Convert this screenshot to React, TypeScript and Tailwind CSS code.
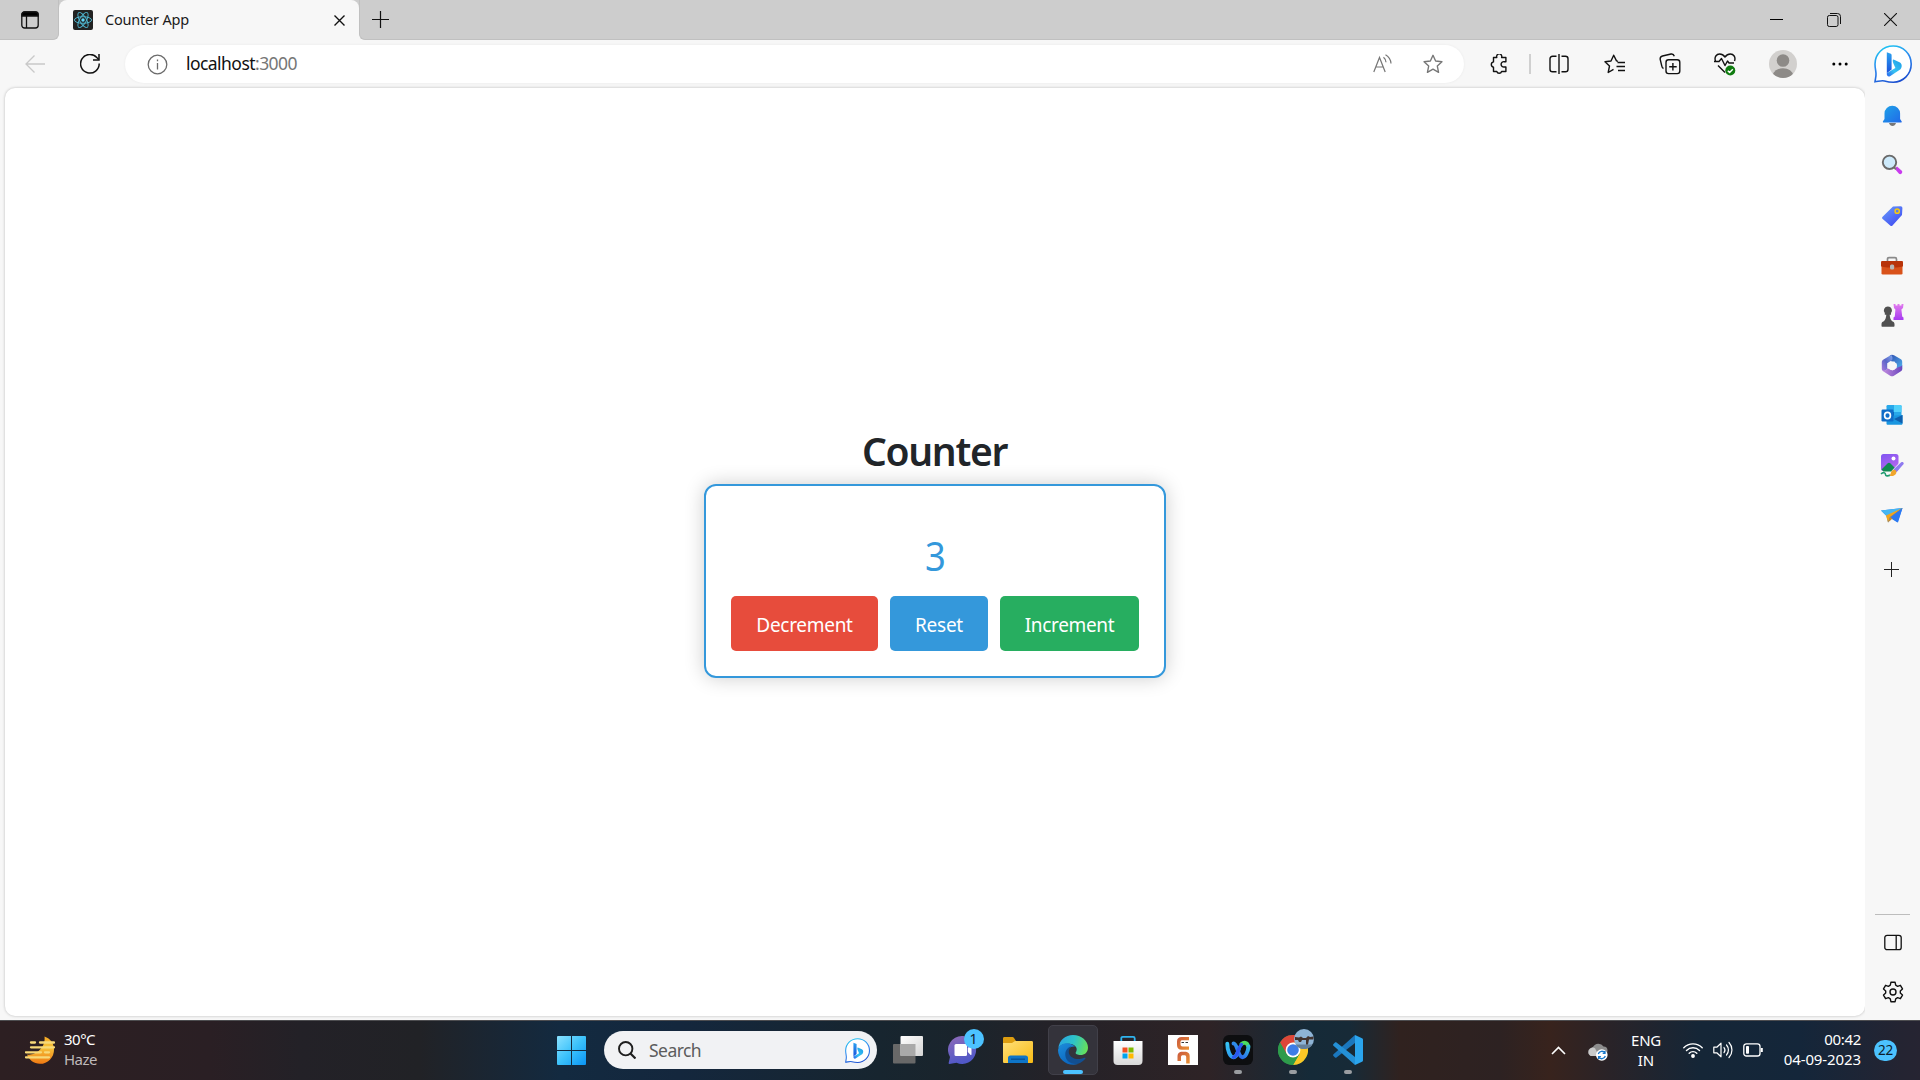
import React from "react";

type IconProps = { className?: string };

function BingBubble({ className, id }: IconProps & { id: string }) {
  return (
    <svg className={className} viewBox="0 0 38 38" fill="none">
      <defs>
        <linearGradient id={id + "a"} x1="0.2" y1="0" x2="0.6" y2="1">
          <stop offset="0" stopColor="#1fc8f2" />
          <stop offset="0.5" stopColor="#2b86ee" />
          <stop offset="1" stopColor="#1b4fd0" />
        </linearGradient>
        <linearGradient id={id + "b"} x1="0" y1="0" x2="0" y2="1">
          <stop offset="0" stopColor="#2aa2f0" />
          <stop offset="1" stopColor="#1a50dc" />
        </linearGradient>
        <linearGradient id={id + "c"} x1="1" y1="0" x2="0" y2="1">
          <stop offset="0" stopColor="#1c9ce8" />
          <stop offset="0.6" stopColor="#37c3f2" />
          <stop offset="1" stopColor="#2a62ee" />
        </linearGradient>
      </defs>
      <path
        d="M19.2 1C9 1 1 9 1 19c0 3.600.8 6.600 1 9.500.2 3-.7 5.500-1 8.300 3.500-.4 6.500-1.500 9.500-.8 3 .8 5.500 1.200 8.700 1.200C29.300 37.200 37.200 29 37.200 19S29.300 1 19.200 1z"
        fill="#fff"
        stroke={`url(#${id}a)`}
        strokeWidth="1.600"
      />
      <path d="M12.800 7.300l4 1.500c.5.2.8.600.8 1.200v14.500l-4.800 3.800z" fill={`url(#${id}b)`} />
      <path d="M19.500 14.500l6 2.700c2.500 1.200 3 4.600 1 7L16 31.300c-2 1-3.500-.8-3.200-3l4.800-3 3.800-2.300-2-4.500c-.8-2-1-4 .1-4z" fill={`url(#${id}c)`} />
    </svg>
  );
}

function TabActions() {
  return (
    <svg className="ml-0.5 h-[18px] w-[18px]" viewBox="0 0 18 18" fill="none" stroke="#111" strokeWidth="1.300">
      <rect x="0.8" y="0.8" width="16.400" height="16.200" rx="2.800" />
      <path d="M1 3.500C1 2 2 1 3.500 1h11C16 1 17 2 17 3.500V5H1z" fill="#000" />
      <path d="M5.500 5v12" />
    </svg>
  );
}

function ReactLogo() {
  return (
    <svg className="h-5 w-5" viewBox="0 0 20 20" fill="none">
      <rect width="20" height="20" rx="2" fill="#222" />
      <g stroke="#4fb5cf" strokeWidth="0.95">
        <ellipse cx="10" cy="10" rx="8.600" ry="3.300" />
        <ellipse cx="10" cy="10" rx="8.600" ry="3.300" transform="rotate(60 10 10)" />
        <ellipse cx="10" cy="10" rx="8.600" ry="3.300" transform="rotate(120 10 10)" />
      </g>
      <circle cx="10" cy="10" r="1.700" fill="#61dafb" />
    </svg>
  );
}

function TitleBar() {
  return (
    <header className="flex h-10 shrink-0 items-stretch bg-[#f7f7f7]">
      <div className="flex w-[59px] items-center justify-center rounded-br-[6px] border-r border-b border-[#c0c0c0] bg-[#cdcdcd]">
        <TabActions />
      </div>
      <div className="flex w-[300px] items-center bg-[linear-gradient(#cdcdcd_12px,#f7f7f7_12px)]">
        <div className="flex h-full w-full items-center rounded-t-[8px] bg-[#f7f7f7] pl-[14px]">
          <ReactLogo />
          <span className="mb-[2px] ml-3 w-[220px] text-[14.500px] leading-5 tracking-[-0.200px] text-[#1b1b1b]">Counter App</span>
          <svg className="mt-px ml-[9px] h-[11px] w-[11px] shrink-0" viewBox="0 0 11 11" stroke="#111" strokeWidth="1.400">
            <path d="M.5.5l10 10M10.500.5l-10 10" />
          </svg>
        </div>
      </div>
      <div className="flex grow items-center rounded-bl-[6px] border-b border-l border-[#c0c0c0] bg-[#cdcdcd]">
        <svg className="ml-3 h-[17px] w-[17px]" viewBox="0 0 17 17" stroke="#111" strokeWidth="1.200">
          <path d="M8.500 0v17M0 8.500h17" />
        </svg>
        <div className="ml-auto flex">
          <div className="flex w-[57px] justify-center">
            <svg className="h-[13px] w-[13px]" viewBox="0 0 13 13" stroke="#000"><path d="M0 6.500h13" /></svg>
          </div>
          <div className="flex w-[57px] justify-center">
            <svg className="h-[14px] w-[14px]" viewBox="0 0 14 14" fill="none" stroke="#111">
              <rect x=".5" y="2.500" width="10.500" height="11" rx="1.800" />
              <path d="M3 .5h7.500a3 3 0 0 1 3 3V11" />
            </svg>
          </div>
          <div className="mr-px flex w-[57px] justify-center">
            <svg className="h-[13px] w-[13px]" viewBox="0 0 13 13" stroke="#111" strokeWidth="1.100"><path d="M0 0l13 13M13 0L0 13" /></svg>
          </div>
        </div>
      </div>
    </header>
  );
}

const star = "M9.500 1.200l2.500 5.500 6 .7-4.400 4.100 1.200 5.900-5.300-3-5.300 3 1.200-5.900L1 7.400l6-.7z";

function Toolbar() {
  return (
    <nav className="flex h-12 shrink-0 items-center bg-[#f7f7f7]">
      <svg className="ml-[25px] h-[18px] w-5" viewBox="0 0 20 18" fill="none" stroke="#c9c9c9" strokeWidth="1.300">
        <path d="M20 9H1M9.500.5L1 9l8.500 8.500" />
      </svg>
      <svg className="ml-[35px] h-5 w-5" viewBox="0 0 20 20" fill="none" stroke="#111" strokeWidth="1.500">
        <path d="M19.200 9.500A9.300 9.300 0 1 1 16.800 3.500l2 2" />
        <path d="M19 0v6h-6" />
      </svg>
      <div className="ml-[25px] flex h-[38px] w-[1339px] items-center rounded-full bg-white shadow-[0_0_3px_rgba(0,0,0,0.06)]">
        <svg className="ml-[22px] h-[21px] w-[21px]" viewBox="0 0 21 21" fill="none" stroke="#6b6b6b" strokeWidth="1.300">
          <circle cx="10.500" cy="10.500" r="9.300" />
          <path d="M10.500 9v6.500M10.500 5.500v1.800" />
        </svg>
        <span className="mb-[2px] ml-[18px] text-[17.500px] leading-6 tracking-[-0.550px] text-[#111]">
          localhost<span className="text-[#767676]">:3000</span>
        </span>
        <div className="ml-auto flex items-center">
          <svg className="mb-0.5 h-[19px] w-[20px]" viewBox="0 0 20 19" fill="none" stroke="#767676" strokeWidth="1.200">
            <path d="M1.800 18L7.500 3.500 13.200 18M3.800 13h7.500M11.500 3.300a7 7 0 0 1 2.500 5M13.500.8a11 11 0 0 1 5.500 8.700" />
          </svg>
          <svg className="mr-[21px] ml-[31px] h-[20px] w-[20px]" viewBox="0 0 19 19" fill="none" stroke="#767676" strokeWidth="1.300" strokeLinejoin="round">
            <path d={star} />
          </svg>
        </div>
      </div>
      <svg className="ml-[25px] h-[21px] w-[21px]" viewBox="0 0 21 21" fill="none" stroke="#111" strokeWidth="1.400" strokeLinejoin="round">
        <path d="M4.500 3.500h3.300a2.600 2.600 0 1 1 4.800 0h4.300v4.200h-1.600a2.700 2.700 0 1 0 0 5.300h1.600v4.500h-4.300a2.500 2.500 0 0 1-4.800 0H4.500v-4.300a2.700 2.700 0 0 1 0-5.300z" />
      </svg>
      <div className="ml-[19px] h-5 w-[2px] bg-[#d0d0d0]" />
      <svg className="ml-[18px] h-5 w-5" viewBox="0 0 20 20" fill="none" stroke="#111" strokeWidth="1.400">
        <path d="M7.500 2.200H3.600C2 2.200 1 3.200 1 4.800v10.400c0 1.600 1 2.600 2.600 2.600h3.900M12.500 2.200h3.900c1.600 0 2.600 1 2.600 2.600v10.400c0 1.600-1 2.600-2.600 2.600h-3.900M10 0v20" />
      </svg>
      <svg className="ml-[35px] h-[21px] w-[22px]" viewBox="0 0 22 21" fill="none" stroke="#111" strokeWidth="1.400" strokeLinejoin="round">
        <path d="M14 7.200l-1.500-.3L9.700 1.200 7 7l-6 .8L5.500 12l-1.300 6.500 5.300-3.200M13.500 8.500H21M12.500 12.500H21M14 16.500h7" />
      </svg>
      <svg className="ml-[33px] h-[22px] w-[22px]" viewBox="0 0 22 22" fill="none" stroke="#111" strokeWidth="1.400">
        <rect x="7" y="6.800" width="13.800" height="13.800" rx="2.600" />
        <path d="M13.900 10v7.500M10.200 13.800h7.500M4.500 15.500A3 3 0 0 1 2.800 13L1.200 6.300A3 3 0 0 1 3.500 3l8.500-2c1.600-.3 2.800.5 3.300 2.300" />
      </svg>
      <svg className="ml-[33px] h-[24px] w-[22px]" viewBox="0 0 22 24" fill="none" stroke="#111" strokeWidth="1.400" strokeLinejoin="round">
        <path d="M1.500 9C0 5 2.500 2 5.700 2c2.300 0 3.800 1 5.300 3 1.500-2 3-3 5.300-3C19.500 2 22 5 20.500 9M0 9.500h5l2.500-3 3.500 7 2.500-4.500 1.500 2h5M4 13.500l7 7" />
        <circle cx="16.300" cy="18.500" r="5" fill="#107c10" stroke="none" />
        <path d="M13.800 18.700l1.800 1.800 3.200-3.300" stroke="#fff" />
      </svg>
      <svg className="ml-[33px] h-7 w-7" viewBox="0 0 28 28">
        <clipPath id="avatar"><circle cx="14" cy="14" r="14" /></clipPath>
        <g clipPath="url(#avatar)">
          <rect width="28" height="28" fill="#d2d0ce" />
          <circle cx="14" cy="10.500" r="6.300" fill="#8d8a87" />
          <ellipse cx="14" cy="25.500" rx="10" ry="7.300" fill="#8d8a87" />
        </g>
      </svg>
      <svg className="ml-[35px] h-1 w-4" viewBox="0 0 16 4"><circle cx="1.800" cy="2" r="1.500" /><circle cx="8" cy="2" r="1.500" /><circle cx="14.200" cy="2" r="1.500" /></svg>
      <BingBubble id="top" className="ml-[26px] h-[38px] w-[38px]" />
    </nav>
  );
}

function Bell() {
  return (
    <svg className="mt-[2px] h-[22px] w-[22px]" viewBox="0 0 22 22">
      <defs><linearGradient id="bell" x1="0" y1="0" x2="1" y2="1"><stop stopColor="#1fa4e8" /><stop offset="1" stopColor="#2068e8" /></linearGradient></defs>
      <path d="M8 18h7c-.5 2-2 3-3.500 3S8.500 20 8 18z" fill="#777" />
      <path d="M3.500 8.500a7.800 7.800 0 0 1 15.600 0v5.500l1.500 2.300c.4.700 0 1.300-.8 1.300H2.800c-.8 0-1.200-.600-.8-1.300L3.500 14z" fill="url(#bell)" />
    </svg>
  );
}

function Magnifier() {
  return (
    <svg className="h-[22px] w-[22px]" viewBox="0 0 22 22">
      <path d="M13.500 14.500l2.500-2 4.800 4.300c1.500 1.700-1 4.500-2.800 3z" fill="#c93bee" />
      <path d="M12.500 13l2.500 2.200" stroke="#777" strokeWidth="2" />
      <circle cx="8.500" cy="8.300" r="6.700" fill="#cdeafb" stroke="#6a6a6a" strokeWidth="1.900" />
    </svg>
  );
}

function Tag() {
  return (
    <svg className="mt-px h-[22px] w-[22px]" viewBox="0 0 22 22">
      <defs><linearGradient id="tag" x1="0" y1="0" x2="0.8" y2="1"><stop stopColor="#6aa0fa" /><stop offset="1" stopColor="#3f49f2" /></linearGradient></defs>
      <path d="M12 1.500l7.500-.2c1.300 0 2 .7 1.900 2L21 10l-9.500 10.500c-.7.800-1.600.8-2.300 0L1.700 14c-.8-.7-.8-1.500-.1-2.300z" fill="url(#tag)" />
      <circle cx="16.200" cy="6.200" r="2.100" fill="#5b7ee8" stroke="#f7c80e" strokeWidth="1.500" />
    </svg>
  );
}

function Toolbox() {
  return (
    <svg className="mt-[2px] h-[22px] w-[24px]" viewBox="0 0 24 22">
      <path d="M7.500 6V4.200C7.500 3 8 2.600 9 2.600h6c1 0 1.500.4 1.500 1.600V6" fill="none" stroke="#8a8a8a" strokeWidth="1.700" />
      <rect x="1.500" y="10" width="21" height="9.500" rx="1.300" fill="#d9521a" />
      <path d="M1 7.500C1 6.300 1.500 6 2.500 6h19c1 0 1.500.3 1.500 1.500V11c0 .8-4 1.500-11 1.500S1 11.800 1 11z" fill="#b83309" />
      <rect x="10" y="9.500" width="4.200" height="5" rx="1.500" fill="#b7b7b7" />
    </svg>
  );
}

function Chess() {
  return (
    <svg className="h-[24px] w-[24px]" viewBox="0 0 24 24">
      <defs><linearGradient id="rook" x1="0" y1="0" x2="0" y2="1"><stop stopColor="#e27bee" /><stop offset="1" stopColor="#a63af0" /></linearGradient></defs>
      <path d="M13.500 1h2v1.500h2V1h2v1.500h2V1h2l-.5 4-1.600 1.500.8 7 1.300 1v2.500h-10v-2.500l1.300-1 .6-7L14 5z" fill="url(#rook)" />
      <path d="M8 3.500a4 4 0 0 1 3 6.600v1.600H9.700c.2 3 .8 5 2.500 6.500 1.500.4 2.300 1.500 2.300 3v1.500c0 .7-.3 1-1 1h-11c-.7 0-1-.3-1-1v-1.500c0-1.500.8-2.600 2.300-3 1.700-1.500 2.300-3.500 2.500-6.500H4.800v-1.600A4 4 0 0 1 8 3.500z" fill="#505050" />
    </svg>
  );
}

function M365() {
  return (
    <svg className="h-[23px] w-[22px]" viewBox="0 0 22 23">
      <defs>
        <linearGradient id="ma" x1="1" y1="0" x2="0" y2="1"><stop stopColor="#7fa8ee" /><stop offset="0.5" stopColor="#5a66c8" /><stop offset="1" stopColor="#a87add" /></linearGradient>
        <linearGradient id="mb" x1="0" y1="0" x2="1" y2="1"><stop stopColor="#2f4cae" /><stop offset="1" stopColor="#4fb4f0" /></linearGradient>
        <linearGradient id="mc" x1="0" y1="0" x2="1" y2="0"><stop stopColor="#c58ee0" /><stop offset="1" stopColor="#6a45bd" /></linearGradient>
      </defs>
      <path d="M9 1.300c1.300-.8 2.700-.8 4 0l6.500 3.800c1.200.7 1.700 1.500 1.700 2.800v7.500l-5.500-1.500V9.500L8 6.500z" fill="url(#mb)" />
      <path d="M10 .9L2.500 5.500C1.300 6.200.8 7 .8 8.300v6.500c0 1 .5 1.700 1.300 2.100 1.800.6 4.100-.6 4.100-2.900V9.300l5-3.200C11.800 4 11.500 1.500 10 .9z" fill="url(#ma)" />
      <path d="M21.200 11v3.800c0 1.300-.5 2.100-1.700 2.800l-7 4.300c-1 .600-2 .600-3 0L2.500 17.600c-.6-.4-1-.8-1.300-1.400 2 .9 4.600.2 5-2l5.300 2.300 5.500-3.300c1.700-.7 3.500-.7 4.200-2.200z" fill="url(#mc)" />
      <path d="M9.300 7.500h4.200l2.600 4-2.600 4.200H9.300l-2.600-4.200z" fill="#f7f7f7" />
    </svg>
  );
}

function Outlook() {
  return (
    <svg className="h-[22px] w-[22px]" viewBox="0 0 22 22">
      <rect x="5.500" y="1" width="15" height="12" rx="1.200" fill="#28a8ea" />
      <path d="M13 1h6.300c.7 0 1.200.5 1.200 1.200V8H13z" fill="#50d0fa" />
      <path d="M6 8h7v6H6z" fill="#0b62b4" />
      <path d="M5.500 12L21.500 11v8.500c0 .8-.5 1.300-1.300 1.300H6.800c-.8 0-1.300-.5-1.300-1.300z" fill="#1a96e0" />
      <path d="M21.500 11v8.500L13 15z" fill="#0f5fae" />
      <rect x=".5" y="5.500" width="12" height="12" rx="1.200" fill="#0f6cc8" />
      <ellipse cx="6.500" cy="11.500" rx="2.900" ry="3.200" fill="none" stroke="#fff" strokeWidth="1.700" />
    </svg>
  );
}

function Designer() {
  return (
    <svg className="h-[24px] w-[24px]" viewBox="0 0 24 24">
      <defs><linearGradient id="des" x1="0" y1="0" x2="0.5" y2="1"><stop stopColor="#7f55f2" /><stop offset="1" stopColor="#b566ee" /></linearGradient></defs>
      <rect x="1" y="1" width="17.500" height="17" rx="2.500" fill="url(#des)" />
      <circle cx="13.500" cy="5.500" r="2" fill="#fff" />
      <path d="M1.500 16.500l6-6c1-1 2-1 3 0l5 5-3 3H3.500z" fill="#118a50" />
      <path d="M11 18.500L20.500 8.500l3.500.5-9 10z" fill="#f7f7f7" />
      <path d="M1 21c2.500-2.500 4.500-1 4.500.5s2 2 5 .5" fill="none" stroke="#1f9b70" strokeWidth="1.600" />
      <path d="M13.500 16.500l7.700-7.200c1.500-1.200 3.300.5 2.200 2L16.500 19.200z" fill="#8f7af0" />
      <path d="M9.500 22.800c1.500-1 1-5 4-6 2-.5 3.500 1.500 2.700 3.500-1 2.500-4 3.300-6.700 2.500z" fill="#f0a62c" />
    </svg>
  );
}

function Plane() {
  return (
    <svg className="h-[22px] w-[22px]" viewBox="0 0 22 22">
      <path d="M0 6.500L21.500 4 16.500 18.500 10 14.500 7 18.500 5.500 12z" fill="#2a7ef0" />
      <path d="M0 6.500L21.500 4 6 12.500z" fill="#46b6f2" />
      <path d="M21.500 4L5 11.500l2 7 2-5.500z" fill="#f3a51c" />
      <path d="M21.500 4L9 13l-2 5.500 4-3.500z" fill="#c98a2c" />
      <path d="M21.500 4L9.500 13.300l7.500 5.200z" fill="#2b78f2" />
    </svg>
  );
}

function Sidebar() {
  const items = [Bell, Magnifier, Tag, Toolbox, Chess, M365, Outlook, Designer, Plane];
  return (
    <aside className="flex w-[55px] flex-col items-center bg-[#f7f7f7] pt-[2px]">
      {items.map((Item, i) => (
        <div key={i} className="flex h-[50px] w-full items-center justify-center pr-px"><Item /></div>
      ))}
      <div className="flex h-[58px] w-full items-center justify-center pr-[2px]">
        <svg className="h-[15px] w-[15px]" viewBox="0 0 15 15" stroke="#222"><path d="M7.500 0v15M0 7.500h15" /></svg>
      </div>
      <div className="mt-auto h-px w-[35px] bg-[#bdbdbd]" />
      <div className="mt-[2px] flex h-[50px] items-center">
        <svg className="h-[17px] w-[18px]" viewBox="0 0 18 17" fill="none" stroke="#111" strokeWidth="1.300">
          <rect x=".8" y="1.300" width="16.400" height="14.400" rx="2.300" /><path d="M12.200 1.500v14" />
        </svg>
      </div>
      <div className="mb-[3px] flex h-[50px] items-center">
        <svg className="h-[22px] w-[22px]" viewBox="0 0 22 22" fill="none" stroke="#111" strokeWidth="1.400" strokeLinejoin="round">
          <circle cx="11" cy="11" r="3" />
          <path d="M8.900 1.300h4.200l.6 2.900 1.900 1.100 2.800-1 2.100 3.600-2.200 2v2.200l2.200 2-2.100 3.600-2.800-1-1.900 1.100-.6 2.900H8.900l-.6-2.900-1.900-1.100-2.800 1-2.100-3.600 2.200-2V9.900l-2.200-2 2.100-3.600 2.800 1 1.900-1.100z" />
        </svg>
      </div>
    </aside>
  );
}

function CounterPage() {
  return (
    <main className="mb-1 ml-[5px] flex grow flex-col items-center rounded-[10px] bg-white pt-[335px] shadow-[0_0_3px_rgba(0,0,0,0.25)]">
      <h1 className="h-[61px] pr-px text-[39px] leading-[56px] font-semibold tracking-[-1.300px] text-[#212529]">Counter</h1>
      <section className="flex h-[194px] w-[462px] flex-col items-center rounded-[12px] border-2 border-[#3498db] shadow-[0_0_20px_rgba(0,0,0,0.2)]">
        <p className="mt-[40px] scale-x-[0.92] text-[39.500px] leading-[60px] text-[#3498db]">3</p>
        <div className="mt-[10px] flex gap-3 text-[19px] text-white">
          <button className="h-[55px] w-[147px] rounded-[5px] bg-[#e74c3c] pt-1 tracking-[-0.300px]">Decrement</button>
          <button className="h-[55px] w-[98px] rounded-[5px] bg-[#3498db] pt-1 tracking-[-0.250px]">Reset</button>
          <button className="h-[55px] w-[139px] rounded-[5px] bg-[#27ae60] pt-1 tracking-[-0.350px]">Increment</button>
        </div>
      </section>
    </main>
  );
}

function Weather() {
  return (
    <svg className="h-[30px] w-[30px]" viewBox="0 0 30 30">
      <defs><linearGradient id="moon" x1="0" y1="0" x2="0" y2="1"><stop stopColor="#f5a623" /><stop offset="0.4" stopColor="#f5c23a" /><stop offset="1" stopColor="#f07a13" /></linearGradient></defs>
      <path d="M19.500 1.500c6 2 9.500 7 9.500 13A14 14 0 0 1 14.800 28.800C9 28.800 4 25 2 19.500 10 21 21 13 19.500 1.500z" fill="url(#moon)" />
      <path d="M6 7.500h4M15 7.500h14M6 12.300h23M1 17.300h15M20 17.300h4M1 22.300h23" stroke="#f7d978" strokeWidth="2.300" strokeLinecap="round" />
    </svg>
  );
}

function WindowsLogo() {
  return (
    <svg className="h-[29px] w-[29px]" viewBox="0 0 29 29">
      <defs><linearGradient id="win" gradientUnits="userSpaceOnUse" x1="0" y1="0" x2="29" y2="29"><stop stopColor="#8be2ff" /><stop offset="0.5" stopColor="#3cc2fb" /><stop offset="1" stopColor="#0a94f4" /></linearGradient></defs>
      <path d="M1 0h13v14H0V1q0-1 1-1zM15 0h13q1 0 1 1v13H15zM0 15h14v14H1q-1 0-1-1zM15 15h14v13q0 1-1 1H15z" fill="url(#win)" />
    </svg>
  );
}

function TaskView() {
  return (
    <svg className="h-[30px] w-[30px]" viewBox="0 0 30 30">
      <defs><linearGradient id="tv" x1="0" y1="0" x2="1" y2="1"><stop stopColor="#fff" /><stop offset="1" stopColor="#d4d4d4" /></linearGradient></defs>
      <rect x="0" y="9" width="22.500" height="19.500" rx="1" fill="#686868" />
      <rect x="7.500" y="1" width="22.500" height="20" rx="1" fill="url(#tv)" />
      <path d="M7.500 9h15v12h-15z" fill="#a9a9a9" />
    </svg>
  );
}

function Chat() {
  return (
    <div className="relative h-[30px] w-[30px]">
      <svg className="h-[30px] w-[30px]" viewBox="0 0 30 30">
        <defs><linearGradient id="chat" x1="0" y1="0" x2="0.3" y2="1"><stop stopColor="#8f6bb8" /><stop offset="1" stopColor="#5058c8" /></linearGradient></defs>
        <path d="M15 1a14 14 0 1 1-6.500 26.800L1.500 29c-.8 0-1-.5-.8-1.200L2 22A14 14 0 0 1 15 1z" fill="url(#chat)" />
        <rect x="6.500" y="9" width="12.500" height="12" rx="1.500" fill="#fff" />
        <path d="M19.800 13l2.600-2.300c.6-.5 1.100-.2 1.100.6v8c0 .8-.5 1-1.100.5L19.800 17z" fill="#fff" />
      </svg>
      <span className="absolute -top-[6px] left-[16px] flex h-5 w-5 items-center justify-center rounded-full bg-[#4cc2ff] text-[14px] leading-5 text-[#10202c]">1</span>
    </div>
  );
}

function Folder() {
  return (
    <svg className="h-[30px] w-[30px]" viewBox="0 0 30 30">
      <defs><linearGradient id="fold" x1="0" y1="0" x2="1" y2="1"><stop stopColor="#ffe07a" /><stop offset="1" stopColor="#f9bb14" /></linearGradient></defs>
      <path d="M0 3.500C0 2.500.5 2 1.500 2H9c1 0 1.500.3 2 1l2 3v5H0z" fill="#dd9d10" />
      <path d="M0 8h9l3-2h16.500c1 0 1.500.5 1.500 1.500v19c0 1-.5 1.500-1.500 1.500h-27C.5 28 0 27.500 0 26.500z" fill="url(#fold)" />
      <path d="M5 28v-5c0-1.800.8-2.600 2.600-2.600h14.800c1.800 0 2.600.8 2.600 2.600v5z" fill="#0e75c8" />
      <path d="M8 24.200h14" stroke="#084f92" strokeWidth="1.300" />
    </svg>
  );
}

function Edge() {
  return (
    <svg className="h-[30px] w-[30px]" viewBox="0 0 30 30">
      <defs>
        <linearGradient id="ea" x1="0" y1="0.3" x2="1" y2="0.5"><stop stopColor="#2aa5e2" /><stop offset="0.5" stopColor="#2dc3c9" /><stop offset="1" stopColor="#66e05a" /></linearGradient>
        <linearGradient id="eb" x1="0" y1="0" x2="0.6" y2="1"><stop stopColor="#1d8ddb" /><stop offset="1" stopColor="#0a64bd" /></linearGradient>
      </defs>
      <path d="M.3 13C1.500 5 7.500 0 15 0c8.500 0 15 6 15 12.500 0 5-3.500 7.500-7.500 7.500-3 0-5.300-1-4.800-2.500 2.500-3.500.3-7.500-4.700-8.500C7.500 8 2.500 9.500.3 13z" fill="url(#ea)" />
      <path d="M0 15C1 9.500 6 7.500 11 8.500c2.500.5 4.500 1.500 6 3-5-.5-8 3-8 7C9 24 13.500 27.500 20 29.100 10 32 0 25 0 15z" fill="url(#eb)" />
      <path d="M13.500 11.500c-2 1.500-3 3.500-2.700 6 .7 5 6.700 7.500 12.200 6.300 2-.5 4-1.300 4.500-.8.5.6-3.500 4.800-8.500 6C12 29.500 7 25 7.300 19c.2-4 2.700-7 6.200-7.500z" fill="#124f91" />
    </svg>
  );
}

function Store() {
  return (
    <svg className="h-[30px] w-[30px]" viewBox="0 0 30 30">
      <defs><linearGradient id="st" x1="0" y1="0" x2="0" y2="1"><stop stopColor="#fff" /><stop offset="1" stopColor="#d9d9d9" /></linearGradient></defs>
      <path d="M.5 6h29v20c0 2.500-1.500 4-4 4h-21c-2.500 0-4-1.500-4-4z" fill="url(#st)" />
      <path d="M8.300 6V3.300c0-1 .5-1.500 1.500-1.500h10.400c1 0 1.500.5 1.500 1.500V6" fill="none" stroke="#2fb4ee" strokeWidth="1.800" />
      <path d="M9.500 12.500h5v5h-5z" fill="#f25022" /><path d="M15.500 12.500h5v5h-5z" fill="#7fba00" />
      <path d="M9.500 18.500h5v5h-5z" fill="#00a4ef" /><path d="M15.500 18.500h5v5h-5z" fill="#ffb900" />
    </svg>
  );
}

function OrangeApp() {
  return (
    <svg className="h-[30px] w-[30px]" viewBox="0 0 30 30">
      <defs><linearGradient id="or" x1="0" y1="0" x2="1" y2="1"><stop stopColor="#c9583f" /><stop offset="1" stopColor="#eb9233" /></linearGradient></defs>
      <path d="M0 0h30v30H0z" fill="#fff" />
      <path d="M21 2v3.300h-6.500c-1.300 0-2 .6-2 1.800v2.500c0 1.200.7 1.800 2 1.800H21v3.300h-7.200C10.500 14.700 9 13 9 10V6.700C9 3.500 10.500 2 13.800 2z" fill="url(#or)" />
      <path d="M13.500 7.500h2.500M17.500 7.500H20" stroke="#333" strokeWidth="1.200" />
      <path d="M9.500 26v-4c0-3.700 1.500-5.200 5-5.200h2c3.700 0 5.200 1.500 5.200 4.700v7h-3.500v-6.300c0-1.500-.7-2-2-2h-1.200c-1.300 0-2 .5-2 2V26z" fill="url(#or)" />
    </svg>
  );
}

function Webex() {
  return (
    <svg className="h-[30px] w-[30px]" viewBox="0 0 30 30" fill="none">
      <defs>
        <linearGradient id="wa" x1="0" y1="0" x2="0" y2="1"><stop stopColor="#36c3f4" /><stop offset="1" stopColor="#2f9df0" /></linearGradient>
        <linearGradient id="wb" x1="0" y1="1" x2="1" y2="0"><stop stopColor="#2652ee" /><stop offset="0.55" stopColor="#2f8ee8" /><stop offset="1" stopColor="#35c8d8" /></linearGradient>
      </defs>
      <rect width="30" height="30" rx="6" fill="#0d0e10" />
      <path d="M4.300 8.800c0 6.500 2.700 13.400 6.200 13.400 3.500 0 4.200-5 5.500-9" stroke="url(#wa)" strokeWidth="3.900" strokeLinecap="round" />
      <path d="M18.500 9c2.500-2 5.500-1.500 6.300 1.500" stroke="#4bdc62" strokeWidth="4" strokeLinecap="round" />
      <path d="M25.500 11.500c-.5 5.500-3 10.700-6.200 10.700-4.300 0-4.800-13.700-8.800-13.700" stroke="url(#wb)" strokeWidth="3.900" strokeLinecap="round" />
      <path d="M10.500 22.200c4 0 4.300-9 8-12.700" stroke="#2b58ee" strokeWidth="3.400" strokeLinecap="round" />
    </svg>
  );
}

function Chrome() {
  return (
    <div className="relative h-[30px] w-[30px]">
      <svg className="h-[30px] w-[30px]" viewBox="0 0 30 30">
        <circle cx="15" cy="15" r="15" fill="#2e9b4b" />
        <path d="M2 7.500A15 15 0 0 1 28 7.500L15 8l-6.500 11z" fill="#dd4638" />
        <path d="M28 7.500A15 15 0 0 1 15 30l6.500-11.200L15 7.500z" fill="#fbc726" />
        <path d="M2 7.500A15 15 0 0 0 15 30l6.500-11.200-13 0z" fill="#2e9b4b" />
        <circle cx="15" cy="15" r="7.400" fill="#fff" /><circle cx="15" cy="15" r="5.800" fill="#3c7de8" />
      </svg>
      <svg className="absolute -top-[6px] left-4 h-5 w-5" viewBox="0 0 20 20">
        <circle cx="10" cy="10" r="10" fill="#8eb4d6" />
        <path d="M1.500 15.500h17A10 10 0 0 1 1.500 15.500z" fill="#65809a" />
        <path d="M1 8l4 .5 2-1 2 1.500h3l2-2 2 1 3.500-.5v3H15l-1 5h-2v-4.500H8L7 13H5l-1-2H1z" fill="#41332f" />
      </svg>
    </div>
  );
}

function VSCode() {
  return (
    <svg className="h-[30px] w-[30px]" viewBox="0 0 30 30">
      <path d="M22 0l7 3.300c.7.3 1 .8 1 1.500v20.400c0 .7-.3 1.200-1 1.500L22 30z" fill="#2aa5ee" />
      <path d="M22 0v8L3.500 22.500c-.5.400-1 .400-1.500 0L.5 21c-.6-.6-.6-1.200 0-1.800z" fill="#1b77bd" />
      <path d="M22 30v-8L3.500 7.500c-.5-.4-1-.4-1.500 0L.5 9c-.6.6-.6 1.200 0 1.800z" fill="#2490d6" />
    </svg>
  );
}

function Search() {
  return (
    <div className="ml-[18px] flex h-[38px] w-[273px] items-center rounded-full bg-[#f1f2f4]">
      <svg className="ml-[14px] h-[18px] w-[18px]" viewBox="0 0 18 18" fill="none" stroke="#1f1f1f" strokeWidth="1.900">
        <circle cx="7.700" cy="7.700" r="6.700" /><path d="M12.500 12.500l5 5" strokeWidth="2.200" />
      </svg>
      <span className="ml-[13px] text-[17.500px] leading-6 tracking-[-0.550px] text-[#5c5c5c]">Search</span>
      <BingBubble id="task" className="mr-[7px] ml-auto h-[25px] w-[25px]" />
    </div>
  );
}

const apps: { Icon: () => React.ReactElement; state?: "active" | "open" }[] = [
  { Icon: TaskView },
  { Icon: Chat },
  { Icon: Folder },
  { Icon: Edge, state: "active" },
  { Icon: Store },
  { Icon: OrangeApp },
  { Icon: Webex, state: "open" },
  { Icon: Chrome, state: "open" },
  { Icon: VSCode, state: "open" },
];

function Tray() {
  return (
    <div className="ml-auto flex items-center text-[15px] leading-5 text-white">
      <svg className="h-[9px] w-[15px]" viewBox="0 0 15 9" fill="none" stroke="#fff" strokeWidth="1.600"><path d="M1 8l6.500-6.500L14 8" /></svg>
      <svg className="mt-[3px] ml-[21px] h-5 w-[21px]" viewBox="0 0 21 20">
        <path d="M5 12.500h11.500a4 4 0 0 0 0-8A6 6 0 0 0 6 5a4 4 0 0 0-1 7.500z" fill="#8d8d8d" />
        <path d="M3.500 14H12L8 6.200A4.200 4.200 0 0 0 3.500 14z" fill="#c9c9c9" />
        <circle cx="14.800" cy="13" r="5.800" fill="#fff" />
        <path d="M11.300 12a3.700 3.700 0 0 1 6.700-1M18 9v2.300h-2.300M18.300 14a3.700 3.700 0 0 1-6.700 1M11.600 17v-2.300h2.300" fill="none" stroke="#1877c9" strokeWidth="1.300" />
      </svg>
      <div className="mb-px ml-[23px] flex w-[30px] flex-col items-center">
        <span className="tracking-[-0.300px]">ENG</span><span>IN</span>
      </div>
      <svg className="ml-[22px] h-[16px] w-5" viewBox="0 0 20 16" fill="none" stroke="#fff" strokeWidth="1.400" strokeLinecap="round">
        <path d="M.8 5.700a13 13 0 0 1 18.400 0M3.500 8.500a9.200 9.200 0 0 1 13 0M6.200 11.200a5.400 5.400 0 0 1 7.600 0" /><circle cx="10" cy="14" r="1.200" fill="#fff" />
      </svg>
      <svg className="ml-[10px] h-[18px] w-5" viewBox="0 0 20 18" fill="none" stroke="#fff" strokeWidth="1.200" strokeLinejoin="round" strokeLinecap="round">
        <path d="M.8 6.200h3L8 2.200v13.600l-4.200-4h-3zM11 6.500a4 4 0 0 1 0 5M13.500 4a7.500 7.500 0 0 1 0 10M16 1.500a11 11 0 0 1 0 15" />
      </svg>
      <svg className="ml-[10px] h-[14px] w-5" viewBox="0 0 20 14" fill="none" stroke="#fff" strokeWidth="1.300">
        <rect x=".8" y=".8" width="16.200" height="12.200" rx="2.600" /><path d="M18.800 5v4" strokeWidth="2" /><rect x="3" y="3" width="3" height="7.800" rx=".8" fill="#fff" stroke="none" />
      </svg>
      <div className="mb-[3px] ml-[19px] flex w-[79px] flex-col items-end tracking-[-0.100px]">
        <span className="tracking-[-0.300px]">00:42</span><span>04-09-2023</span>
      </div>
      <span className="mr-[23px] ml-[13px] flex h-[21px] w-[23px] items-center justify-center rounded-full bg-[#4cc2ff] text-[13.500px] tracking-[-0.300px] text-[#0d1d2a]">22</span>
    </div>
  );
}

function Taskbar() {
  return (
    <footer className="flex h-[60px] shrink-0 items-center border-t border-[#4d4d50] bg-[linear-gradient(90deg,#2d1f22_0px,#2a1f24_210px,#232127_300px,#212226_420px,#132a40_560px,#14273d_680px,#17252f_880px,#1a242c_960px,#242228_1050px,#2e2326_1210px,#152a38_1310px,#172a37_1350px,#30221f_1400px,#2d2222_1500px,#38231d_1550px,#292328_1610px,#152637_1700px,#14263a_1800px,#242432_1900px,#262432_1920px)] pb-px">
      <div className="flex w-[557px] items-center pl-[25px]">
        <Weather />
        <div className="mb-[3px] ml-[9px] flex flex-col text-[15px] leading-5 tracking-[-0.500px] text-white"><span>30°C</span><span className="text-[#bfb9ba]">Haze</span></div>
      </div>
      <WindowsLogo />
      <Search />
      <div className="ml-[3px] flex">
        {apps.map(({ Icon, state }, i) => (
          <div key={i} className="flex w-[55px] justify-center">
            <div className={state === "active" ? "relative flex h-[50px] w-[50px] items-center justify-center rounded-[5px] border border-[#414049] bg-[#34333b]" : "relative flex h-[50px] w-[50px] items-center justify-center"}>
              <Icon />
              {state === "active" && <span className="absolute bottom-0 h-1 w-5 rounded-full bg-[#4cc2ff]" />}
              {state === "open" && <span className="absolute bottom-px h-1 w-2 rounded-full bg-[#9a9da1]" />}
            </div>
          </div>
        ))}
      </div>
      <Tray />
    </footer>
  );
}

export default function App() {
  return (
    <div className="flex h-[1080px] w-[1920px] flex-col overflow-hidden bg-[#f7f7f7] font-['Noto_Sans','Open_Sans',sans-serif]">
      <TitleBar />
      <Toolbar />
      <div className="flex grow">
        <CounterPage />
        <Sidebar />
      </div>
      <Taskbar />
    </div>
  );
}
